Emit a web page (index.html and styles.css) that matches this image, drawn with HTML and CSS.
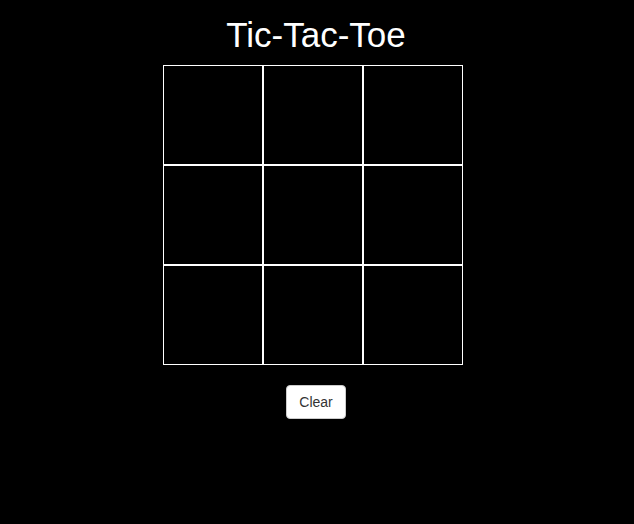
FILE: index.html
```html
<!DOCTYPE html>
<html>
<head>
<meta charset="utf-8">
<title>Tic-Tac-Toe</title>
<link rel="stylesheet" href="styles.css">
</head>
<body>
<main class="app">
  <h1 class="title">Tic-Tac-Toe</h1>
  <div class="board">
    <div class="cell"></div><div class="cell"></div><div class="cell"></div>
    <div class="cell"></div><div class="cell"></div><div class="cell"></div>
    <div class="cell"></div><div class="cell"></div><div class="cell"></div>
  </div>
  <button class="btn">Clear</button>
</main>
</body>
</html>
```

FILE: styles.css
```css
html, body {
  margin: 0;
  padding: 0;
  background: #000;
  height: 100%;
}
body {
  font-family: "Liberation Sans", Arial, sans-serif;
  color: #fff;
}
.app {
  display: flex;
  flex-direction: column;
  align-items: center;
  padding-top: 15px;
  padding-right: 2px;
}
.title {
  margin: 0 0 10px;
  font-size: 35px;
  line-height: 40px;
  font-weight: 400;
}
.board {
  display: grid;
  grid-template-columns: repeat(3, 100px);
  grid-template-rows: repeat(3, 100px);
  margin-right: 6px;
}
.cell {
  box-sizing: border-box;
  border: 1px solid #fff;
}
.btn {
  margin-top: 20px;
  box-sizing: border-box;
  height: 34px;
  padding: 6px 12px;
  font-family: "Liberation Sans", Arial, sans-serif;
  font-size: 14px;
  line-height: 20px;
  color: #333;
  background: #fff;
  border: 1px solid #ccc;
  border-radius: 4px;
}
```
